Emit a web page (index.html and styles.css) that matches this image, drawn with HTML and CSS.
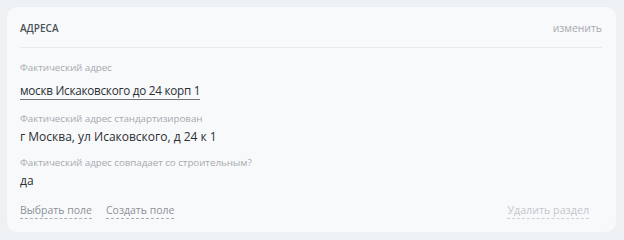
FILE: index.html
```html
<!DOCTYPE html>
<html lang="ru">
<head>
<meta charset="utf-8">
<link rel="stylesheet" href="styles.css">
</head>
<body>
<section class="card">
  <header class="card-head">
    <h2 class="card-title">Адреса</h2>
    <span class="edit">изменить</span>
  </header>
  <div class="fields">
    <div class="field">
      <div class="label">Фактический адрес</div>
      <div class="value input">москв Искаковского до 24 корп 1</div>
    </div>
    <div class="field">
      <div class="label">Фактический адрес стандартизирован</div>
      <div class="value">г Москва, ул Исаковского, д 24 к 1</div>
    </div>
    <div class="field">
      <div class="label">Фактический адрес совпадает со строительным?</div>
      <div class="value">да</div>
    </div>
  </div>
  <footer class="card-foot">
    <div class="actions">
      <span class="link">Выбрать поле</span>
      <span class="link">Создать поле</span>
    </div>
    <span class="link muted">Удалить раздел</span>
  </footer>
</section>
</body>
</html>
```

FILE: styles.css
```css
* { box-sizing: border-box; }
html, body { margin: 0; padding: 0; }
body {
  background: #eef1f4;
  font-family: "Open Sans", "Noto Sans", sans-serif;
  padding: 7px 8px 8px 7px;
}
.card {
  background: #f8f9fb;
  border-radius: 10px;
  height: 225px;
  padding: 0 14px 0 13px;
  display: flex;
  flex-direction: column;
}
.card-head {
  display: flex;
  justify-content: space-between;
  align-items: center;
  height: 41px;
  border-bottom: 1px solid #e7eaed;
  padding-top: 2px;
}
.card-title {
  margin: 0;
  font-size: 10px;
  font-weight: 600;
  text-transform: uppercase;
  color: #4b5157;
}
.edit {
  font-size: 10.4px;
  color: #a7abb0;
}
.fields {
  padding-top: 12px;
  display: flex;
  flex-direction: column;
  gap: 8px;
}
.field { display: flex; flex-direction: column; }
.label {
  font-size: 9.8px;
  letter-spacing: -0.05px;
  color: #a5aaaf;
  line-height: 15px;
}
.value {
  font-size: 12px;
  color: #2b2f33;
  line-height: 20px;
  margin-top: 1px;
}
.value.input {
  align-self: flex-start;
  font-size: 11.7px;
  letter-spacing: -0.25px;
  line-height: 18px;
  margin-top: 6px;
  margin-bottom: 3px;
  border-bottom: 1px solid #6f757b;
}
.card-foot {
  margin-top: auto;
  display: flex;
  justify-content: space-between;
  align-items: center;
  padding: 0 13px 13px 0;
}
.actions { display: flex; gap: 14px; }
.link {
  font-size: 10.5px;
  color: #8b9197;
  border-bottom: 1px dashed #a9aeb3;
  line-height: 16px;
}
.link.muted {
  font-size: 10.7px;
  color: #c3c7cb;
  border-bottom-color: #cdd1d5;
}
```
